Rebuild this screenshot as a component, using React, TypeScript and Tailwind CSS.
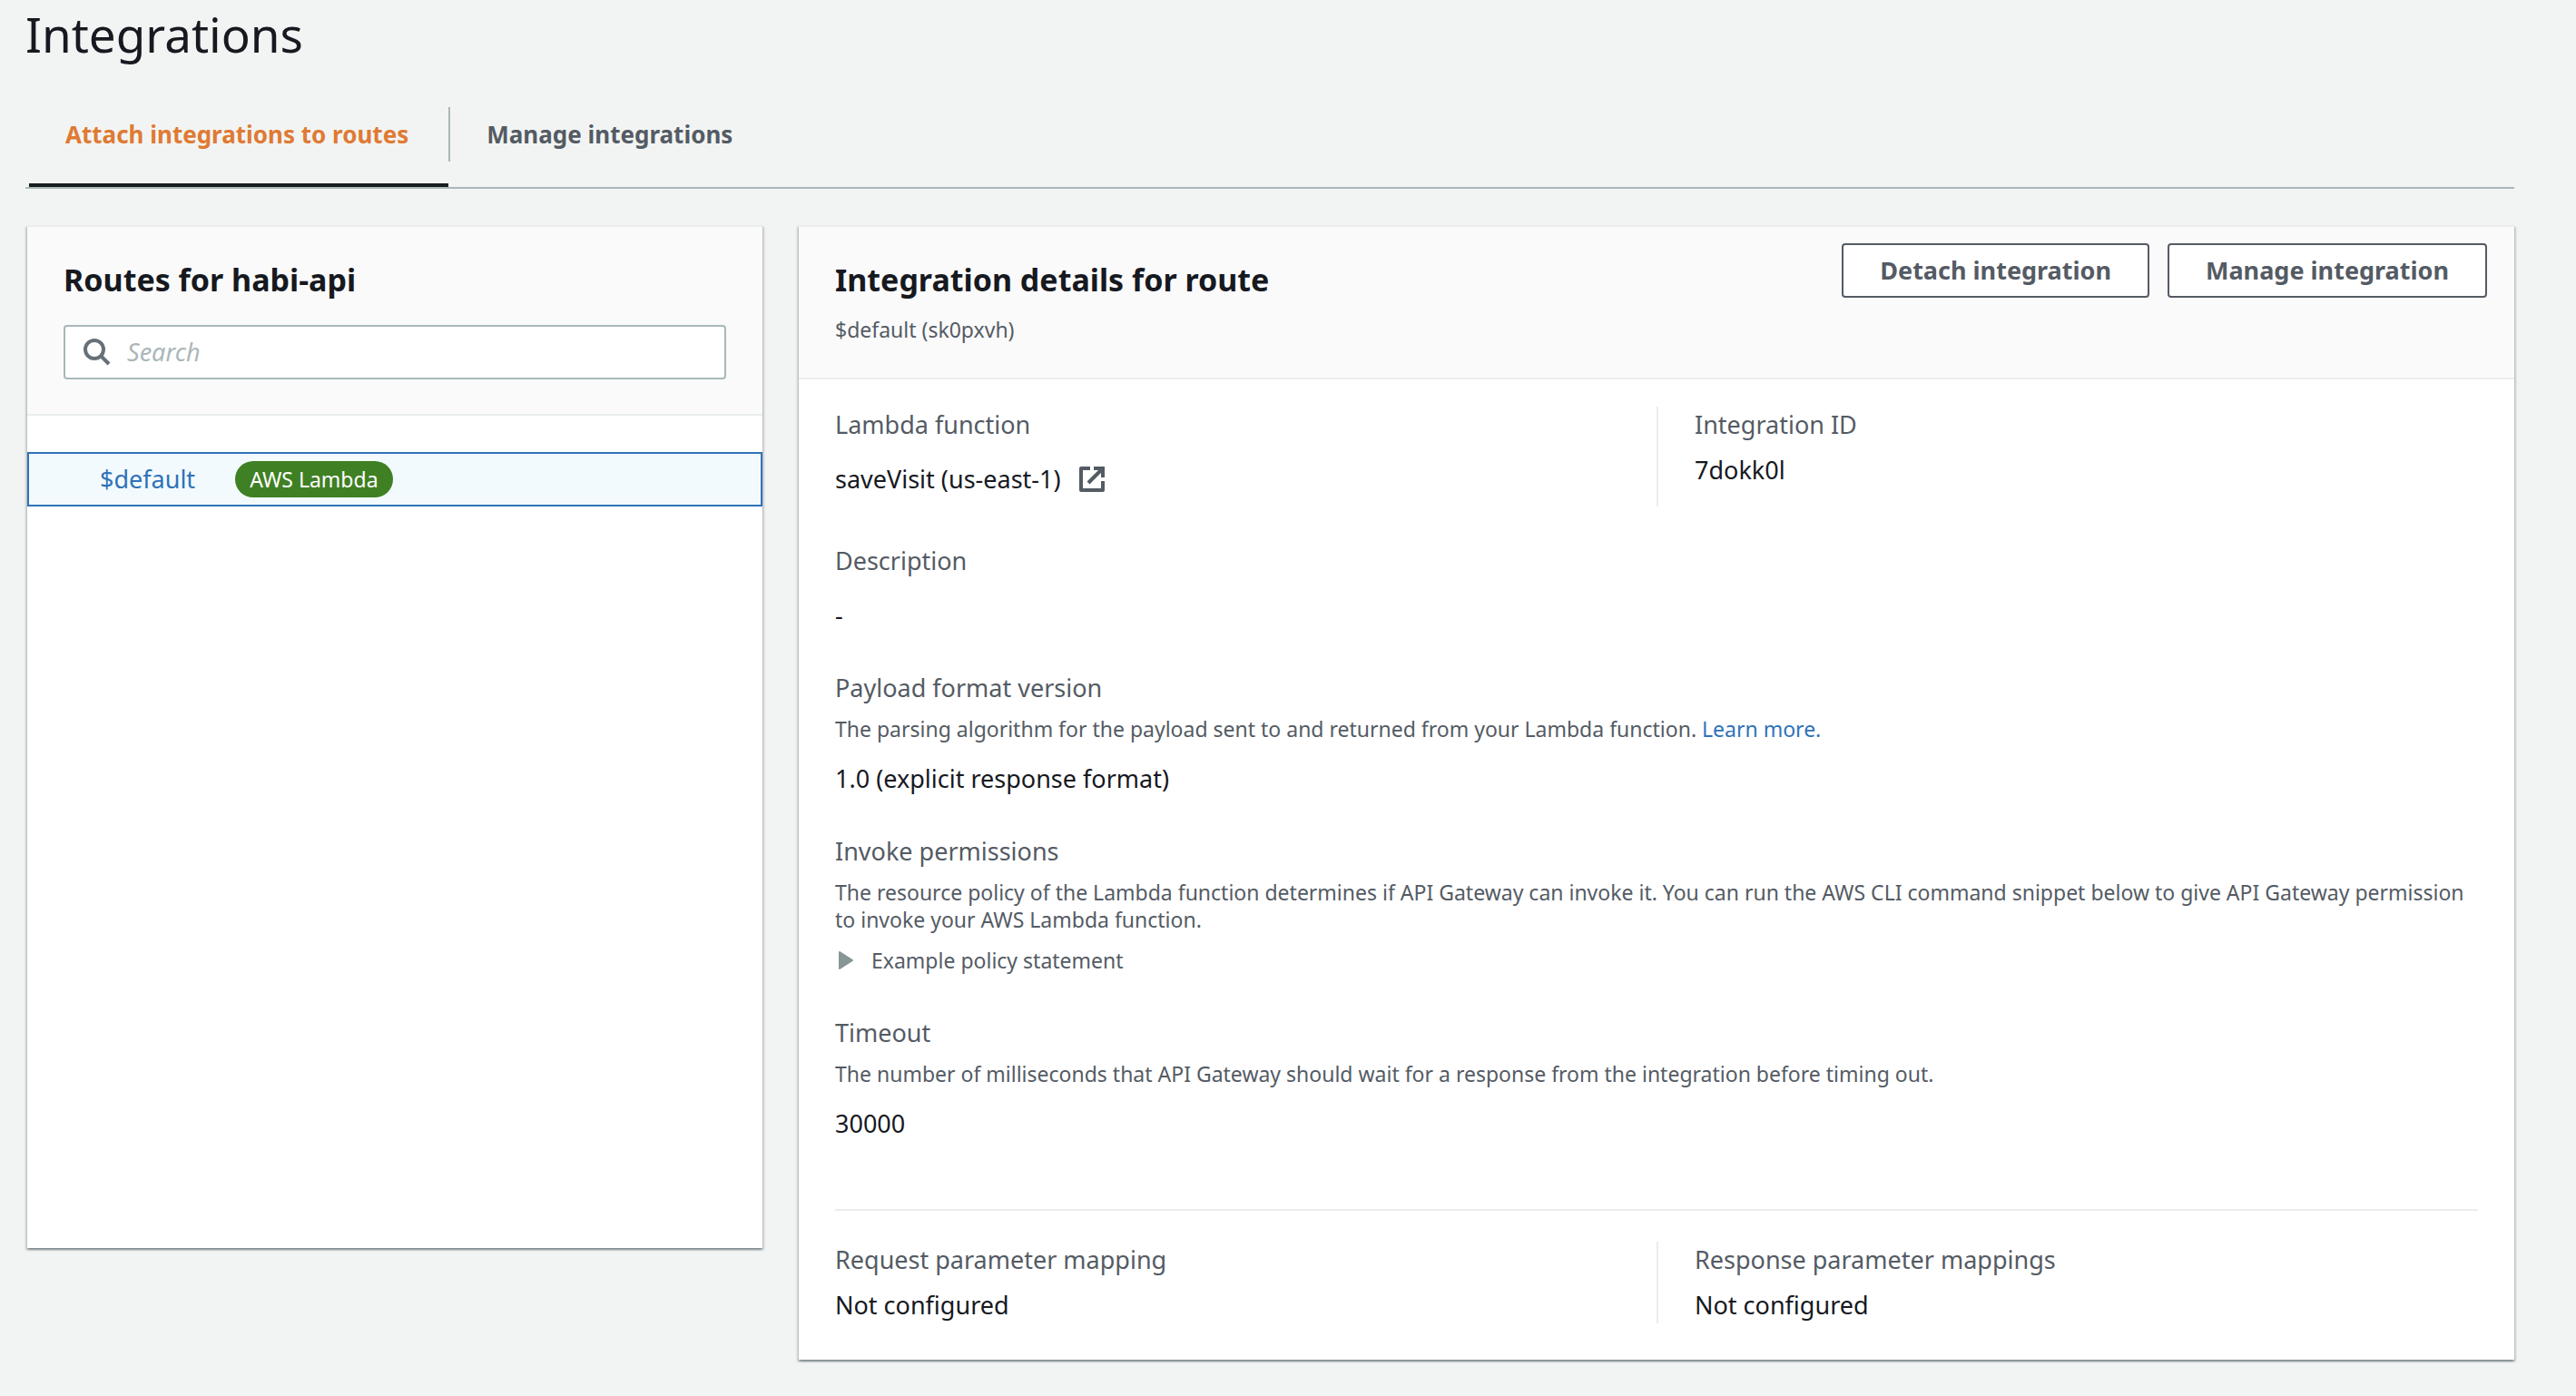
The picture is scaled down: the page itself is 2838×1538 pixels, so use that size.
import type { ReactNode } from "react";

function SearchIcon() {
  return (
    <svg className="h-[30px] w-[30px] text-[#687078]" viewBox="0 0 30 30" fill="none" stroke="currentColor" strokeWidth="4" aria-hidden="true">
      <circle cx="12" cy="12" r="10" />
      <path d="M18.5 18.5L28 28" />
    </svg>
  );
}

function ExternalIcon() {
  return (
    <svg className="h-7 w-7" viewBox="0 0 28 28" fill="none" stroke="currentColor" strokeWidth="4" aria-hidden="true">
      <path d="M12 2H2V26H26V16" strokeLinejoin="round" />
      <path d="M16 2H26V12" />
      <path d="M26 2L10 18" />
    </svg>
  );
}

function Card({ children }: { children: ReactNode }) {
  return (
    <section className="border-t-2 border-[#eaeded] bg-white shadow-[0_2px_2px_0_rgba(0,28,36,0.3),2px_2px_2px_0_rgba(0,28,36,0.15),-2px_2px_2px_0_rgba(0,28,36,0.15)]">
      {children}
    </section>
  );
}

function Label({ children }: { children: ReactNode }) {
  return <h3 className="text-[#545b64]">{children}</h3>;
}

function Hint({ children }: { children: ReactNode }) {
  return <p className="mt-2.5 text-[23px] leading-[30px] text-[#545b64]">{children}</p>;
}

function ActionButton({ children }: { children: ReactNode }) {
  return (
    <button
      type="button"
      className="h-[60px] rounded-sm border-2 border-[#545b64] bg-white px-10 font-bold text-[#545b64]"
    >
      {children}
    </button>
  );
}

export default function App() {
  return (
    <main className="min-h-screen bg-[#f2f4f3] pr-[68px] pl-7 font-['Noto_Sans',sans-serif] text-[27px] leading-[40px] text-[#16191f]">
      <h1 className="pt-0.5 text-[53px] leading-[72px]">Integrations</h1>

      <div role="tablist" className="mt-11 flex border-b-2 border-[#aab7b8] pl-1">
        <button type="button" role="tab" aria-selected="true" className="border-b-4 border-[#161d1f] pb-6 text-[26px] font-bold text-[#df7a33]">
          <span className="block pr-11 pl-10 leading-[60px]">Attach integrations to routes</span>
        </button>
        <button type="button" role="tab" aria-selected="false" className="border-b-4 border-transparent pb-6 text-[26px] font-bold text-[#545b64]">
          <span className="block border-l-2 border-[#aab7b8] pr-11 pl-10 leading-[60px]">Manage integrations</span>
        </button>
      </div>

      <div className="mt-10 grid grid-cols-[3fr_7fr] items-start gap-10 pl-0.5">
        <Card>
          <header className="border-b-2 border-[#eaeded] bg-[#fafafa] px-10 pt-9 pb-[38px]">
            <h2 className="text-[34px] leading-[44px] font-bold">Routes for habi-api</h2>
            <label className="mt-7 flex h-[60px] items-center gap-[18px] rounded-sm border-2 border-[#aab7b8] bg-white px-5">
              <SearchIcon />
              <input
                type="search"
                aria-label="Search routes"
                placeholder="Search"
                className="min-w-0 flex-1 bg-transparent italic outline-none placeholder:text-[#aab7b8]"
              />
            </label>
          </header>
          <ul className="min-h-[917px] pt-10">
            <li className="flex h-[60px] items-center gap-11 border-2 border-[#2f72b8] bg-[#f2fafd] pl-[78px]">
              <a href="#default" className="text-[#2f72b8]">$default</a>
              <span className="rounded-full bg-[#3f8024] px-4 text-[23px] text-white">AWS Lambda</span>
            </li>
          </ul>
        </Card>

        <Card>
          <header className="flex items-start justify-between border-b-2 border-[#eaeded] bg-[#fafafa] pr-[30px] pl-10">
            <div className="pt-9 pb-[38px]">
              <h2 className="text-[34px] leading-[44px] font-bold">Integration details for route</h2>
              <p className="mt-[18px] text-[23px] leading-[30px] text-[#545b64]">$default (sk0pxvh)</p>
            </div>
            <div className="mt-[18px] flex gap-5">
              <ActionButton>Detach integration</ActionButton>
              <ActionButton>Manage integration</ActionButton>
            </div>
          </header>

          <div className="px-10 pt-[30px] pb-10">
            <div className="flex flex-col gap-10">
              <div className="grid grid-cols-2">
                <div className="pb-2.5">
                  <Label>Lambda function</Label>
                  <p className="mt-5 flex items-center gap-5">
                    saveVisit (us-east-1)
                    <a href="#function" aria-label="Open function" className="text-[#545b64]">
                      <ExternalIcon />
                    </a>
                  </p>
                </div>
                <div className="border-l-2 border-[#eaeded] pl-10">
                  <Label>Integration ID</Label>
                  <p className="mt-2.5">7dokk0l</p>
                </div>
              </div>

              <div>
                <Label>Description</Label>
                <p className="mt-5">-</p>
              </div>

              <div>
                <Label>Payload format version</Label>
                <Hint>
                  The parsing algorithm for the payload sent to and returned from your Lambda function.{" "}
                  <a href="#learn-more" className="text-[#2f72b8]">Learn more.</a>
                </Hint>
                <p className="mt-5">1.0 (explicit response format)</p>
              </div>

              <div>
                <Label>Invoke permissions</Label>
                <Hint>
                  The resource policy of the Lambda function determines if API Gateway can invoke it. You can run the AWS CLI
                  command snippet below to give API Gateway permission to invoke your AWS Lambda function.
                </Hint>
                <button type="button" aria-expanded="false" className="mt-2.5 flex items-center gap-4 text-[23px] text-[#545b64]">
                  <svg className="h-6 w-6" viewBox="0 0 24 24" fill="#879596" stroke="#879596" strokeWidth="2" strokeLinejoin="round" aria-hidden="true">
                    <path d="M5 3V21L19 12Z" />
                  </svg>
                  Example policy statement
                </button>
              </div>

              <div>
                <Label>Timeout</Label>
                <Hint>
                  The number of milliseconds that API Gateway should wait for a response from the integration before timing out.
                </Hint>
                <p className="mt-5">30000</p>
              </div>
            </div>

            <hr className="mt-[74px] mb-[34px] border-t-2 border-[#eaeded]" />

            <div className="grid grid-cols-2">
              <div>
                <Label>Request parameter mapping</Label>
                <p className="mt-2.5">Not configured</p>
              </div>
              <div className="border-l-2 border-[#eaeded] pl-10">
                <Label>Response parameter mappings</Label>
                <p className="mt-2.5">Not configured</p>
              </div>
            </div>
          </div>
        </Card>
      </div>
    </main>
  );
}
